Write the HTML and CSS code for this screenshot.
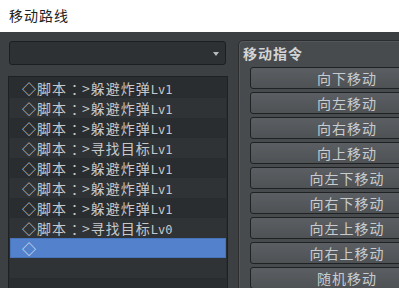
FILE: index.html
```html
<!DOCTYPE html>
<html lang="zh">
<head>
    <meta charset="UTF-8">
    <title>移动路线</title>
    <link rel="stylesheet" href="styles.css">
</head>
<body>
    <div class='title'>移动路线</div>
    <div class='main'>
        <div class='left'>
            <div class='combo'><span class='arrow'></span></div>
            <ul class='list'>
                <li>◇脚本<span class='colon'>：</span>&gt;躲避炸弹<span class='lv'>Lv1</span></li>
                <li>◇脚本<span class='colon'>：</span>&gt;躲避炸弹<span class='lv'>Lv1</span></li>
                <li>◇脚本<span class='colon'>：</span>&gt;躲避炸弹<span class='lv'>Lv1</span></li>
                <li>◇脚本<span class='colon'>：</span>&gt;寻找目标<span class='lv'>Lv1</span></li>
                <li>◇脚本<span class='colon'>：</span>&gt;躲避炸弹<span class='lv'>Lv1</span></li>
                <li>◇脚本<span class='colon'>：</span>&gt;躲避炸弹<span class='lv'>Lv1</span></li>
                <li>◇脚本<span class='colon'>：</span>&gt;躲避炸弹<span class='lv'>Lv1</span></li>
                <li>◇脚本<span class='colon'>：</span>&gt;寻找目标<span class='lv'>Lv0</span></li>
                <li class='active'>◇</li>
                <li></li>
                <li></li>
            </ul>
        </div>
        <div class='group'>
            <div class='group-title'>移动指令</div>
            <div class='btns'>
                <div class='btn'>向下移动</div>
                <div class='btn'>向左移动</div>
                <div class='btn'>向右移动</div>
                <div class='btn'>向上移动</div>
                <div class='btn'>向左下移动</div>
                <div class='btn'>向右下移动</div>
                <div class='btn'>向左上移动</div>
                <div class='btn'>向右上移动</div>
                <div class='btn'>随机移动</div>
            </div>
        </div>
    </div>
</body>
</html>
```

FILE: styles.css
```css
*{
    margin: 0;
    padding: 0;
    box-sizing: border-box;
}
body{
    width: 399px;
    height: 288px;
    overflow: hidden;
    background: #3d4043;
    font-family: "Noto Sans CJK SC", "DejaVu Sans", sans-serif;
    font-size: 14px;
}
.title{
    height: 32px;
    line-height: 31px;
    padding-left: 9px;
    background: #fff;
    color: #222;
    letter-spacing: 1px;
}
.main{
    display: flex;
    height: 256px;
    overflow: hidden;
}
.left{
    width: 220px;
    flex-shrink: 0;
    margin-left: 8px;
    padding-top: 9px;
}
.combo{
    position: relative;
    height: 24px;
    margin: 0 2px 0 1px;
    background: #2e3134;
    border: 1px solid #1c1e20;
    border-radius: 3px;
}
.arrow{
    position: absolute;
    right: 6px;
    top: 10px;
    border-left: 3px solid transparent;
    border-right: 3px solid transparent;
    border-top: 4px solid #b8bbbe;
}
.list{
    list-style: none;
    margin-top: 11px;
    height: 230px;
    background: #2b2e31;
    border: 1px solid #1e2022;
    padding: 1px;
}
.list li{
    height: 20px;
    line-height: 20px;
    padding-left: 12px;
    color: #c6c9cc;
    letter-spacing: 1px;
    background: #2a2d30;
    white-space: nowrap;
}
.list li:nth-child(even){
    background: #303336;
}
.list li.active{
    background: #5381cc;
    border: 1px solid #4774b8;
    line-height: 18px;
    padding-left: 11px;
    color: #dfe6f2;
}
.colon{
    letter-spacing: -7px;
    padding: 0 4px 0 4px;
}
.lv{
    font-family: "DejaVu Sans Mono", monospace;
    font-size: 12px;
    letter-spacing: 0;
}
.group{
    width: 220px;
    flex-shrink: 0;
    margin: 8px 0 0 10px;
    height: 260px;
    background: #484b4e;
    border: 1px solid #2a2c2e;
    border-radius: 5px;
    box-shadow: inset 1px 1px 0 #55585b;
    padding: 3px 0 0 4px;
}
.group-title{
    font-weight: bold;
    line-height: 19px;
    color: #d2d4d6;
    letter-spacing: 1px;
}
.btns{
    display: flex;
    flex-direction: column;
    gap: 3px;
    margin: 4px 0 0 7px;
    width: 194px;
}
.btn{
    height: 22px;
    line-height: 20px;
    text-align: center;
    color: #c9cccf;
    letter-spacing: 1px;
    background: linear-gradient(#5b5f63, #4e5255);
    border: 1px solid #1f2123;
    border-radius: 3px;
}
```
